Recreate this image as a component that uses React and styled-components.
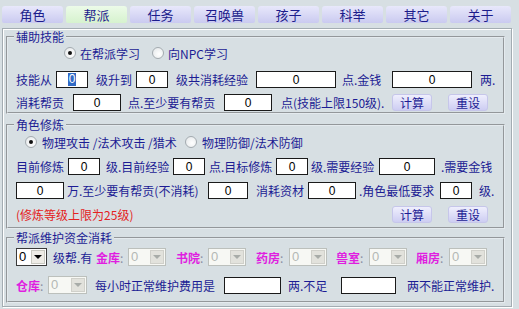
import React from 'react'
import styled, { createGlobalStyle } from 'styled-components'

const GlobalStyle = createGlobalStyle`
  html, body {
    margin: 0;
    padding: 0;
    background: #d7dfe3;
  }
  body {
    font-family: "Noto Sans CJK SC", "Liberation Sans", sans-serif;
    font-size: 12px;
    color: #1c1c94;
  }
`

const Page = styled.div`
  width: 519px;
  height: 309px;
  overflow: hidden;
  background: #d7dfe3;
`

const TabBar = styled.div`
  display: grid;
  grid-template-columns: repeat(8, 61px);
  gap: 3px;
  padding: 6px 0 0 2px;
`

const Tab = styled.div`
  height: 17px;
  display: flex;
  align-items: center;
  justify-content: center;
  border-radius: 3px 3px 2px 2px;
  background: ${(p) => (p.$active ? 'linear-gradient(#ecfbe8, #d6f2ce)' : 'linear-gradient(#e8e8fb, #cacaf0)')};
  color: #1c1c8c;
  font-size: 13px;
`

const Frame = styled.div`
  margin: 5px 0 0 2px;
  width: 510px;
  box-sizing: border-box;
  border: 1px solid #a3acb2;
  box-shadow: inset 1px 1px 0 #fff, 1px 1px 0 #fff;
  padding: 1px 6px 3px 3px;
`

const Group = styled.fieldset`
  margin: ${(p) => p.$mt || 0}px 0 0;
  padding: 0 0 ${(p) => p.$pb || 0}px;
  border: 2px groove #e4eaee;
  min-width: 0;
`

const Legend = styled.legend`
  margin-left: 6px;
  padding: 0 2px;
  line-height: 14px;
  font-size: 12px;
  color: #1c1c94;
`

const Row = styled.div`
  display: flex;
  align-items: center;
  height: ${(p) => p.$h || 17}px;
  margin-top: ${(p) => p.$mt || 0}px;
  padding-left: ${(p) => p.$pad || 0}px;
  white-space: nowrap;
`

const tones = {
  navy: '#1c1c94',
  red: '#e42222',
  pink: '#e01ee0',
}

const Label = styled.span`
  box-sizing: border-box;
  flex: none;
  width: ${(p) => (p.$w ? p.$w + 'px' : 'auto')};
  padding-left: ${(p) => p.$pl ?? 8}px;
  color: ${(p) => tones[p.$tone || 'navy']};
  font-weight: ${(p) => (p.$tone === 'pink' ? 700 : 400)};
  line-height: 17px;
`

const Colon = styled.span`
  color: #8a90a4;
  font-weight: 400;
`

const Field = styled.div`
  box-sizing: border-box;
  flex: none;
  width: ${(p) => p.$w}px;
  height: 17px;
  background: #fff;
  border: 1px solid #1a1a1a;
  display: flex;
  align-items: center;
  justify-content: center;
  font-family: "Liberation Sans", sans-serif;
  font-size: 12px;
  color: #000;
`

const Selected = styled.span`
  background: #316ac5;
  color: #fff;
  padding: 0 1px;
  line-height: 13px;
`

const Button = styled.div`
  flex: none;
  box-sizing: border-box;
  width: 40px;
  height: 17px;
  margin-left: ${(p) => p.$ml || 0}px;
  border-radius: 3px;
  border: 1px solid #c6c6ea;
  background: linear-gradient(#efeffd, #cdcdf2);
  display: flex;
  align-items: center;
  justify-content: center;
  font-size: 12px;
  color: #1c1c94;
`

const SelectBox = styled.div`
  flex: none;
  box-sizing: border-box;
  width: ${(p) => p.$w}px;
  height: 18px;
  display: flex;
  align-items: stretch;
  padding: 1px;
  border: 1px solid ${(p) => (p.$off ? '#bcc0bc' : '#3a3a3a')};
  background: ${(p) => (p.$off ? '#f7f8f4' : '#fff')};
`

const SelectValue = styled.span`
  flex: 1;
  padding-left: 1px;
  font-family: "Liberation Sans", sans-serif;
  font-size: 13px;
  line-height: 14px;
  color: ${(p) => (p.$off ? '#b4b8b4' : '#000')};
`

const SelectArrow = styled.span`
  width: 14px;
  box-sizing: border-box;
  display: flex;
  align-items: center;
  justify-content: center;
  background: ${(p) => (p.$off ? '#e2e2dc' : '#eeece6')};
  border: 1px solid ${(p) => (p.$off ? '#d0d0ca' : '#c8c8c0')};

  &::after {
    content: '';
    border-left: 4px solid transparent;
    border-right: 4px solid transparent;
    border-top: 4px solid ${(p) => (p.$off ? '#a8aca8' : '#000')};
  }
`

const RadioItem = styled.div`
  flex: none;
  display: flex;
  align-items: center;
  gap: ${(p) => p.$gap || 4}px;
  width: ${(p) => (p.$w ? p.$w + 'px' : 'auto')};
  color: #1c1c94;
`

const Radio = styled.span`
  position: relative;
  flex: none;
  width: 12px;
  height: 12px;
  box-sizing: border-box;
  border-radius: 50%;
  border: 1px solid #a4abb0;
  background: radial-gradient(circle at 60% 60%, #fff, #e2e6e8);

  &::after {
    content: '';
    display: ${(p) => (p.$on ? 'block' : 'none')};
    position: absolute;
    left: 3px;
    top: 3px;
    width: 4px;
    height: 4px;
    border-radius: 50%;
    background: #111;
  }
`

const Select = ({ w, off, value = '0' }) => (
  <SelectBox $w={w} $off={off}>
    <SelectValue $off={off}>{value}</SelectValue>
    <SelectArrow $off={off} />
  </SelectBox>
)

const Hall = ({ name, w, pl }) => (
  <Label $tone="pink" $w={w} $pl={pl}>
    {name}
    <Colon>:</Colon>
  </Label>
)

const tabs = ['角色', '帮派', '任务', '召唤兽', '孩子', '科举', '其它', '关于']

const App = () => {
  return (
    <Page>
      <GlobalStyle />
      <TabBar>
        {tabs.map((t) => (
          <Tab key={t} $active={t === '帮派'}>
            {t}
          </Tab>
        ))}
      </TabBar>

      <Frame>
        <Group $pb={1}>
          <Legend>辅助技能</Legend>
          <Row $h={18} $pad={56}>
            <RadioItem $w={88}>
              <Radio $on />
              在帮派学习
            </RadioItem>
            <RadioItem>
              <Radio />
              向NPC学习
            </RadioItem>
          </Row>
          <Row $mt={9}>
            <Label $w={48} $pl={8}>技能从</Label>
            <Field $w={32}>
              <Selected>0</Selected>
            </Field>
            <Label $w={48}>级升到</Label>
            <Field $w={32}>0</Field>
            <Label $w={88}>级共消耗经验</Label>
            <Field $w={80}>0</Field>
            <Label $w={56} $pl={6}>点.金钱</Label>
            <Field $w={80}>0</Field>
            <Label>两.</Label>
          </Row>
          <Row $mt={6}>
            <Label $w={65}>消耗帮贡</Label>
            <Field $w={48}>0</Field>
            <Label $w={103} $pl={7}>点.至少要有帮贡</Label>
            <Field $w={48}>0</Field>
            <Label $w={120} $pl={9}>点(技能上限150级).</Label>
            <Button>计算</Button>
            <Button $ml={16}>重设</Button>
          </Row>
        </Group>

        <Group $mt={4} $pb={4}>
          <Legend>角色修炼</Legend>
          <Row $h={18} $mt={1} $pad={17}>
            <RadioItem $w={160} $gap={5}>
              <Radio $on />
              物理攻击 /法术攻击 /猎术
            </RadioItem>
            <RadioItem $gap={5}>
              <Radio />
              物理防御/法术防御
            </RadioItem>
          </Row>
          <Row $mt={7}>
            <Label $w={60}>目前修炼</Label>
            <Field $w={32}>0</Field>
            <Label $w={73} $pl={6}>级.目前经验</Label>
            <Field $w={32}>0</Field>
            <Label $w={71} $pl={4}>点.目标修炼</Label>
            <Field $w={32}>0</Field>
            <Label $w={71} $pl={3}>级.需要经验</Label>
            <Field $w={56}>0</Field>
            <Label $pl={6}>.需要金钱</Label>
          </Row>
          <Row $mt={7} $pad={8}>
            <Field $w={48}>0</Field>
            <Label $w={144} $pl={3}>万.至少要有帮贡(不消耗)</Label>
            <Field $w={40}>0</Field>
            <Label $w={60}>消耗资材</Label>
            <Field $w={48}>0</Field>
            <Label $w={84} $pl={3}>.角色最低要求</Label>
            <Field $w={32}>0</Field>
            <Label $pl={7}>级.</Label>
          </Row>
          <Row $mt={7}>
            <Label $w={384} $tone="red">(修炼等级上限为25级)</Label>
            <Button>计算</Button>
            <Button $ml={16}>重设</Button>
          </Row>
        </Group>

        <Group $mt={2} $pb={7}>
          <Legend>帮派维护资金消耗</Legend>
          <Row $h={18} $mt={3} $pad={8}>
            <Select w={31} />
            <Label $w={49} $pl={6}>级帮.有</Label>
            <Hall name="金库" w={32} pl={0} />
            <Select w={38} off />
            <Hall name="书院" w={42} pl={10} />
            <Select w={38} off />
            <Hall name="药房" w={43} pl={10} />
            <Select w={38} off />
            <Hall name="兽室" w={42} pl={9} />
            <Select w={38} off />
            <Hall name="厢房" w={42} pl={9} />
            <Select w={38} off />
          </Row>
          <Row $h={18} $mt={10} $pad={8}>
            <Hall name="仓库" w={32} pl={0} />
            <Select w={39} off />
            <Label $w={137}>每小时正常维护费用是</Label>
            <Field $w={57} />
            <Label $w={60} $pl={7}>两.不足</Label>
            <Field $w={55} />
            <Label $pl={11}>两不能正常维护.</Label>
          </Row>
        </Group>
      </Frame>
    </Page>
  )
}

export default App
